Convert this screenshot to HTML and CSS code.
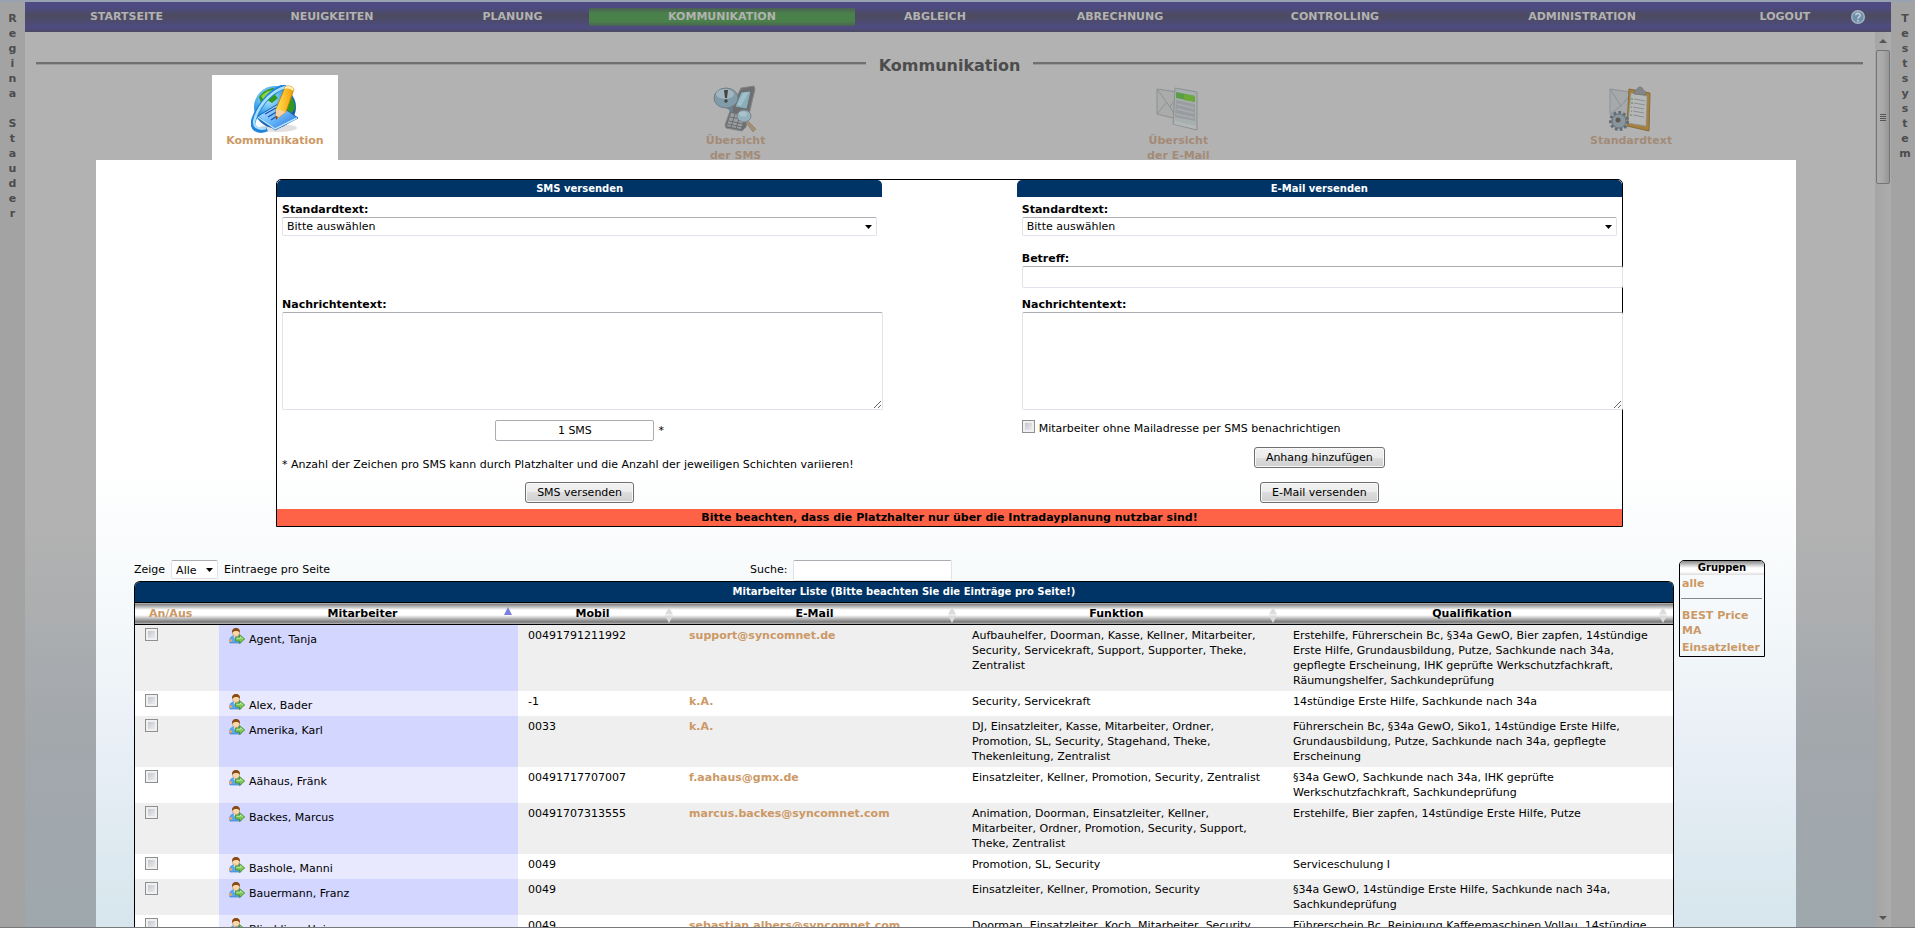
FILE: index.html
```html
<!DOCTYPE html>
<html lang="de">
<head>
<meta charset="utf-8">
<title>Kommunikation</title>
<link rel="stylesheet" href="styles.css">
</head>
<body>
<svg class="defs" aria-hidden="true">
  <symbol id="person" viewBox="0 0 16 16">
    <path d="M1 15c-1-3 0-6 3-7l4-1 4 2v6z" fill="#5aa9f0" stroke="#2f73bd" stroke-width=".6"/>
    <path d="M4.500 8l2.500 4.500L9 8z" fill="#fff"/>
    <circle cx="1.500" cy="12.500" r="1.500" fill="#e9a66a"/>
    <path d="M3.500 4.500a3.500 4 0 0 1 7 0c0 2.500-1.500 4-3.500 4s-3.500-1.500-3.500-4z" fill="#f9d8ad" stroke="#b5763c" stroke-width=".5"/>
    <path d="M3.200 5C2.500 1.500 4.500 0 7 0s4.500 1.500 3.800 5C10 3.500 9 3 7.500 3 5.500 3 4 3.500 3.200 5z" fill="#8a4a12"/>
    <path d="M6.500 9h4V6.500L15.700 11l-5.200 4.600V13h-4z" fill="#7cc651" stroke="#3d8a28" stroke-width=".8"/>
    <path d="M7.500 10.300h4V9l2.400 2" fill="none" stroke="#d6f2c0" stroke-width=".7"/>
  </symbol>
  <symbol id="both" viewBox="0 0 8 16"><path d="M0 7.500L4 0l4 7.500zM0 8.500h8L4 16z" fill="#dcdcdc"/></symbol>
</svg>
<div class="page">
  <aside class="side">R<br>e<br>g<br>i<br>n<br>a<br><br>S<br>t<br>a<br>u<br>d<br>e<br>r</aside>
  <div class="app">
    <nav class="nav">
      <a href="#">STARTSEITE</a>
      <a href="#">NEUIGKEITEN</a>
      <a href="#">PLANUNG</a>
      <a href="#" class="active">KOMMUNIKATION</a>
      <a href="#">ABGLEICH</a>
      <a href="#">ABRECHNUNG</a>
      <a href="#">CONTROLLING</a>
      <a href="#">ADMINISTRATION</a>
      <a href="#">LOGOUT</a>
      <a href="#" class="help" aria-label="Hilfe">
        <svg width="14" height="14" viewBox="0 0 14 14"><circle cx="7" cy="7" r="6.300" fill="#6f8fab" stroke="#a3b4c3" stroke-width="1.400"/><path d="M4.800 5.300C4.800 2.700 9.200 2.700 9.200 5.200 9.200 7 7 6.800 7 8.700" fill="none" stroke="#c4ced6" stroke-width="1.600"/><circle cx="7" cy="10.700" r="1" fill="#c4ced6"/></svg>
      </a>
    </nav>
    <div class="viewport">
      <main class="content">
        <h1 class="title">Kommunikation</h1>
        <div class="tabs">
          <a href="#" class="tab current">
            <svg width="48" height="48" viewBox="0 0 48 48">
              <defs>
                <radialGradient id="sea" cx=".35" cy=".3" r=".8"><stop offset="0" stop-color="#bfeaff"/><stop offset=".5" stop-color="#2b9be6"/><stop offset="1" stop-color="#0a3f8c"/></radialGradient>
                <linearGradient id="sheet" x1="0" y1="0" x2="1" y2="1"><stop offset="0" stop-color="#c4ecff"/><stop offset=".5" stop-color="#6ab8fb"/><stop offset="1" stop-color="#1763d0"/></linearGradient>
                <linearGradient id="pen" x1="0" x2="1"><stop offset="0" stop-color="#ffe257"/><stop offset="1" stop-color="#f59a00"/></linearGradient>
              </defs>
              <ellipse cx="27" cy="43" rx="19" ry="4" fill="#000" opacity=".12"/>
              <circle cx="24" cy="22" r="21" fill="url(#sea)"/>
              <path d="M8 12c4-6 9-8 14-9l6 3-4 4 3 3-6 5-5-3-6 3zM33 6c7 4 11 10 11 17l-5 8-5-6 2-7-5-5z" fill="#2f9a1d"/>
              <path d="M10 11c4-4 8-6 12-6l-3 5-7 4z" fill="#8ad24a"/>
              <path d="M35 1C22 4 9 18 3 34c-3 9 3 14 13 10" fill="none" stroke="#2384d9" stroke-width="5"/>
              <path d="M35 2C22 5 9 18 4 33c-3 9 3 12 11 10" fill="none" stroke="#a9e0ff" stroke-width="2.500"/>
              <path d="M7 31L27 19l20 14-23 12z" fill="url(#sheet)" stroke="#1560b8"/>
              <path d="M7 32l17 12 22-11" fill="none" stroke="#b8e4ff" stroke-width="1.500"/>
              <path d="M14 29l11-6M17 32l10-6M20 35l6-4" stroke="#1a4fb5" stroke-width="1.300"/>
              <path d="M25 24L34 2c3-2 7-1 9 2l-8 23-10 7z" fill="url(#pen)" stroke="#c07800" stroke-width=".8"/>
              <path d="M25 24l10 3-10 7z" fill="#f5d2a0"/><path d="M25 31l2 1-2 3z" fill="#703c10"/>
              <path d="M34 2c3-2 7-1 9 2l-1 2c-2-2-5-3-9-2z" fill="#fff0b8"/>
            </svg>
            <span>Kommunikation</span>
          </a>
          <a href="#" class="tab">
            <svg width="48" height="48" viewBox="0 0 48 48">
              <path d="M29 3l13-2 1 3-9 38-4 4-16-3-1-3 5-14z" fill="#626467" stroke="#7c7e81"/>
              <path d="M29 7l10-1-4 18-12-2z" fill="#83adbd" stroke="#555" stroke-width=".7"/>
              <path d="M31 8l6-1-8 14-4-1z" fill="#9cc4d0"/>
              <path d="M19 28l14 3-4 13-14-3z" fill="#999ca0"/>
              <path d="M18 32l14 3M17 36l14 3M16 39l14 3M23 29l-4 13M28 30l-4 14" stroke="#5e6063" stroke-width="1"/>
              <path d="M13 22l8 6-1-8z" fill="#5d7c8d"/>
              <ellipse cx="14" cy="13" rx="12" ry="10" fill="#7897a8" stroke="#66747c"/>
              <ellipse cx="13" cy="9" rx="9" ry="5" fill="#b5c7cf" opacity=".65"/>
              <path d="M12 5h4l-1 8h-2z" fill="#333"/><circle cx="14" cy="16" r="1.700" fill="#333"/>
              <path d="M34 34l10 10-3 3-9-12z" fill="#a08a6b" stroke="#857358" stroke-width=".6"/>
              <ellipse cx="32" cy="31" rx="7" ry="6" fill="#8fb1c1" stroke="#747a7d"/>
              <ellipse cx="31" cy="29" rx="4" ry="2.500" fill="#aac5cf"/>
            </svg>
            <span>Übersicht<br>der SMS</span>
          </a>
          <a href="#" class="tab">
            <svg width="48" height="48" viewBox="0 0 48 48">
              <path d="M3 4l20 3v27L3 29z" fill="#a9abac" stroke="#888a8b"/>
              <path d="M3 4l13 18L24 10M3 29l9-11M16 22l6 11" fill="none" stroke="#8a8c8d" stroke-width="1"/>
              <path d="M21 3l22 4v38l-24-6z" fill="#a7afb0" stroke="#858b8c"/>
              <path d="M22 7l19 4v6l-19-4z" fill="#4f9a36"/><path d="M30 9l11 2v6l-11-2z" fill="#62a826"/>
              <path d="M22 15l19 4v17l-20-4z" fill="#969a9c"/>
              <path d="M23 19l17 4M23 24l17 4M22 29l18 4" stroke="#a9adaf" stroke-width="1.600"/>
              <path d="M21 36l21 5v3l-22-5z" fill="#b5b9ba"/>
            </svg>
            <span>Übersicht<br>der E-Mail</span>
          </a>
          <a href="#" class="tab">
            <svg width="48" height="48" viewBox="0 0 48 48">
              <path d="M3 4l20 3v25L3 29z" fill="#a5a8ab" stroke="#8a8c8d"/>
              <path d="M3 4l11 17L23 10M14 21L3 29" fill="none" stroke="#888b8e"/>
              <path d="M22 4l21 4-1 38-22-5z" fill="#a3782a" stroke="#806128"/>
              <path d="M24 8l16 3-1 30-18-3z" fill="#b6b9ba" stroke="#8d8f90" stroke-width=".7"/>
              <path d="M27 14l11 2M27 18l11 2M26 22l11 2M26 26l11 2M26 30l11 2" stroke="#868c8e" stroke-width="1.200"/>
              <path d="M24 14l2 .3M24 18l2 .3M24 22l1 .3M24 26l1 .3M23 30l2 .3" stroke="#6c9a62" stroke-width="1.500"/>
              <path d="M27 9c0-3 1-4 3-4 0-4 6-4 6 0 2 1 3 2 3 5z" fill="#7c8083" stroke="#66696b" stroke-width=".7"/>
              <circle cx="12" cy="36" r="8" fill="#8b979f" stroke="#56616a" stroke-width="4" stroke-dasharray="2.600 2"/>
              <circle cx="12" cy="36" r="7" fill="#84929a" stroke="#626d75"/>
              <circle cx="11" cy="35" r="2.500" fill="#4f4b45"/>
            </svg>
            <span>Standardtext</span>
          </a>
        </div>
        <div class="panel">
          <form class="message">
            <div class="columns">
              <section class="column">
                <h2 class="bar">SMS versenden</h2>
                <div class="field first">
                  <label for="smsStd">Standardtext:</label>
                  <select id="smsStd" class="box"><option>Bitte auswählen</option></select>
                </div>
                <div class="field wide">
                  <label for="smsText">Nachrichtentext:</label>
                  <textarea id="smsText" class="box"></textarea>
                </div>
                <div class="row counter"><input class="count" type="text" value="1 SMS" aria-label="Anzahl SMS" readonly><span>*</span></div>
                <p class="note">* Anzahl der Zeichen pro SMS kann durch Platzhalter und die Anzahl der jeweiligen Schichten variieren!</p>
                <div class="row send"><button type="button">SMS versenden</button></div>
              </section>
              <section class="column">
                <h2 class="bar">E-Mail versenden</h2>
                <div class="field first">
                  <label for="mailStd">Standardtext:</label>
                  <select id="mailStd" class="box"><option>Bitte auswählen</option></select>
                </div>
                <div class="field wide subject">
                  <label for="subj">Betreff:</label>
                  <input id="subj" class="box" type="text">
                </div>
                <div class="field wide">
                  <label for="mailText">Nachrichtentext:</label>
                  <textarea id="mailText" class="box"></textarea>
                </div>
                <div class="notify"><input type="checkbox" id="notify"><label for="notify">Mitarbeiter ohne Mailadresse per SMS benachrichtigen</label></div>
                <div class="row attach"><button type="button">Anhang hinzufügen</button></div>
                <div class="row send"><button type="button">E-Mail versenden</button></div>
              </section>
            </div>
            <p class="warning">Bitte beachten, dass die Platzhalter nur über die Intradayplanung nutzbar sind!</p>
          </form>
          <div class="lower">
            <section class="list">
              <div class="tools">
                <div class="length"><label for="len">Zeige</label><select id="len" class="box"><option>Alle</option></select><span>Eintraege pro Seite</span></div>
                <div class="search"><label for="search">Suche:</label><input id="search" class="box" type="text"></div>
              </div>
              <div class="frame">
                <h2 class="bar">Mitarbeiter Liste (Bitte beachten Sie die Einträge pro Seite!)</h2>
                <table class="staff">
                  <colgroup><col class="c1"><col class="c2"><col class="c3"><col class="c4"><col class="c5"><col class="c6"></colgroup>
                  <thead>
                    <tr>
                      <th class="toggle"><a href="#">An/Aus</a></th>
                      <th>Mitarbeiter<svg class="sort up" viewBox="0 0 8 8"><path d="M0 8L4 0l4 8z" fill="#7a7fe0"/></svg></th>
                      <th>Mobil<svg class="sort"><use href="#both"/></svg></th>
                      <th>E-Mail<svg class="sort"><use href="#both"/></svg></th>
                      <th>Funktion<svg class="sort"><use href="#both"/></svg></th>
                      <th>Qualifikation<svg class="sort"><use href="#both"/></svg></th>
                    </tr>
                  </thead>
                  <tbody>
                    <tr><td><input type="checkbox" aria-label="Agent, Tanja"></td><td><span class="name"><svg><use href="#person"/></svg>Agent, Tanja</span></td><td>00491791211992</td><td><a href="#">support@syncomnet.de</a></td><td>Aufbauhelfer, Doorman, Kasse, Kellner, Mitarbeiter, Security, Servicekraft, Support, Supporter, Theke, Zentralist</td><td>Erstehilfe, Führerschein Bc, §34a GewO, Bier zapfen, 14stündige Erste Hilfe, Grundausbildung, Putze, Sachkunde nach 34a, gepflegte Erscheinung, IHK geprüfte Werkschutzfachkraft, Räumungshelfer, Sachkundeprüfung</td></tr>
                    <tr><td><input type="checkbox" aria-label="Alex, Bader"></td><td><span class="name"><svg><use href="#person"/></svg>Alex, Bader</span></td><td>-1</td><td><a href="#">k.A.</a></td><td>Security, Servicekraft</td><td>14stündige Erste Hilfe, Sachkunde nach 34a</td></tr>
                    <tr><td><input type="checkbox" aria-label="Amerika, Karl"></td><td><span class="name"><svg><use href="#person"/></svg>Amerika, Karl</span></td><td>0033</td><td><a href="#">k.A.</a></td><td>DJ, Einsatzleiter, Kasse, Mitarbeiter, Ordner, Promotion, SL, Security, Stagehand, Theke, Thekenleitung, Zentralist</td><td>Führerschein Bc, §34a GewO, Siko1, 14stündige Erste Hilfe, Grundausbildung, Putze, Sachkunde nach 34a, gepflegte Erscheinung</td></tr>
                    <tr><td><input type="checkbox" aria-label="Aähaus, Fränk"></td><td><span class="name"><svg><use href="#person"/></svg>Aähaus, Fränk</span></td><td>00491717707007</td><td><a href="#">f.aahaus@gmx.de</a></td><td>Einsatzleiter, Kellner, Promotion, Security, Zentralist</td><td>§34a GewO, Sachkunde nach 34a, IHK geprüfte Werkschutzfachkraft, Sachkundeprüfung</td></tr>
                    <tr><td><input type="checkbox" aria-label="Backes, Marcus"></td><td><span class="name"><svg><use href="#person"/></svg>Backes, Marcus</span></td><td>00491707313555</td><td><a href="#">marcus.backes@syncomnet.com</a></td><td>Animation, Doorman, Einsatzleiter, Kellner, Mitarbeiter, Ordner, Promotion, Security, Support, Theke, Zentralist</td><td>Erstehilfe, Bier zapfen, 14stündige Erste Hilfe, Putze</td></tr>
                    <tr><td><input type="checkbox" aria-label="Bashole, Manni"></td><td><span class="name"><svg><use href="#person"/></svg>Bashole, Manni</span></td><td>0049</td><td></td><td>Promotion, SL, Security</td><td>Serviceschulung I</td></tr>
                    <tr><td><input type="checkbox" aria-label="Bauermann, Franz"></td><td><span class="name"><svg><use href="#person"/></svg>Bauermann, Franz</span></td><td>0049</td><td></td><td>Einsatzleiter, Kellner, Promotion, Security</td><td>§34a GewO, 14stündige Erste Hilfe, Sachkunde nach 34a, Sachkundeprüfung</td></tr>
                    <tr><td><input type="checkbox" aria-label="Blindding, Heinz"></td><td><span class="name"><svg><use href="#person"/></svg>Blindding, Heinz</span></td><td>0049</td><td><a href="#">sebastian.albers@syncomnet.com</a></td><td>Doorman, Einsatzleiter, Koch, Mitarbeiter, Security</td><td>Führerschein Bc, Reinigung Kaffeemaschinen Vollau, 14stündige</td></tr>
                  </tbody>
                </table>
              </div>
            </section>
            <aside class="groups">
              <h2>Gruppen</h2>
              <a href="#">alle</a>
              <hr>
              <a href="#">BEST Price MA</a>
              <a href="#">Einsatzleiter</a>
            </aside>
          </div>
        </div>
      </main>
      <div class="scroll" aria-hidden="true">
        <svg width="8" height="5" viewBox="0 0 8 5"><path d="M0 5l4-4 4 4z" fill="#555"/></svg>
        <div class="thumb"><i></i><i></i><i></i><i></i></div>
        <svg class="down" width="8" height="5" viewBox="0 0 8 5"><path d="M0 0l4 4 4-4z" fill="#555"/></svg>
      </div>
    </div>
  </div>
  <aside class="side right">T<br>e<br>s<br>t<br>s<br>y<br>s<br>t<br>e<br>m</aside>
</div>
</body>
</html>
```
FILE: styles.css
```css
* { box-sizing: border-box; }

body {
  margin: 0;
  height: 100vh;
  overflow: hidden;
  font: 11px/15px "DejaVu Sans", Verdana, sans-serif;
  color: #000;
}

h1, h2, p { margin: 0; }
input, select, textarea, button { font: inherit; color: inherit; margin: 0; }
a { color: #cc9966; font-weight: bold; text-decoration: none; }
.defs { position: absolute; width: 0; height: 0; }

.page {
  display: flex;
  height: 100vh;
  border-top: 2px solid #99a2b0;
  border-bottom: 1px solid #77797c;
  background: #a3a3a3;
}

.side {
  flex: 0 0 25px;
  padding-top: 9px;
  text-align: center;
  font-weight: bold;
  color: #4c4c4c;
}
.side.right { flex-basis: 24px; padding-left: 4px; }

.app { flex: 1; min-width: 0; display: flex; flex-direction: column; }

.nav {
  display: grid;
  grid-template-columns: 203fr 208fr 153fr 266fr 160fr 210fr 220fr 274fr 132fr 40fr;
  flex: 0 0 30px;
  align-items: center;
  background: linear-gradient(#4d4b82, #4d4b80 20%, #4c4a5e 45%, #4d4b66 55%, #4d4b82 85%, #4c4a62);
}
.nav a { color: #b2b2b2; text-align: center; line-height: 18px; }
.nav .active { background: linear-gradient(#4b5f55, #4a8049 30%, #4a8049 75%, #4b5f55); }
.nav .help { display: flex; text-align: left; }

.viewport { flex: 1; min-height: 0; display: flex; }
.content {
  flex: 1;
  min-width: 0;
  display: flex;
  flex-direction: column;
  overflow: hidden;
  background: linear-gradient(#b2b2b2 55%, #a2a7ac 80%, #9ea8ac);
}

.title {
  display: flex;
  align-items: center;
  gap: 13px;
  margin: 24px 12px 0 11px;
  font-size: 16px;
  line-height: 19px;
  color: #4c4c4c;
}
.title::before, .title::after {
  content: "";
  flex: 1;
  height: 2px;
  margin-bottom: 5px;
  background: #707070;
  border-bottom: 1px solid #999;
}

.tabs {
  display: grid;
  grid-template-columns: 478fr 444fr 442fr 464fr;
  margin: 0 12px 0 11px;
  height: 85px;
}
.tab {
  justify-self: center;
  display: flex;
  flex-direction: column;
  align-items: center;
  width: 126px;
  padding-top: 10px;
  text-align: center;
  color: #a38b77;
}
.tab svg { flex: 0 0 48px; opacity: .85; }
.tab.current { background: #fff; color: #cc9966; }
.tab.current svg { opacity: 1; }

.panel {
  flex: 1;
  min-height: 0;
  margin: 0 79px 0 71px;
  padding: 19px 31px 0 38px;
  background: linear-gradient(#fff 40%, #f4f8fa 60%, #e6edf5 80%, #d6e6ec);
}

.message {
  width: 1347px;
  max-width: 83%;
  margin: 0 auto;
  border: 1px solid #000;
  border-radius: 5px 5px 0 0;
}
.columns { display: grid; grid-template-columns: 1fr 1fr; column-gap: 10%; }
.column { display: flex; flex-direction: column; min-width: 0; }
.bar {
  background: #003366;
  color: #fff;
  font-size: 10px;
  line-height: 17px;
  text-align: center;
  border-radius: 5px 5px 0 0;
}
.box {
  background: #fff;
  border: 1px solid #e2e3ea;
  border-top-color: #abadb3;
  border-radius: 2px;
}
select.box {
  appearance: none;
  height: 19px;
  padding: 0 4px;
  background: #fff url("data:image/svg+xml,%3Csvg xmlns='http://www.w3.org/2000/svg' width='7' height='4'%3E%3Cpath d='M0 0h7L3.500 4z'/%3E%3C/svg%3E") no-repeat right 4px center;
}
.field { display: flex; flex-direction: column; padding: 0 5px; }
.field label { font-weight: bold; }
.field.first { padding-top: 5px; height: 61px; }
.field.wide { padding-right: 0; margin-right: -1px; }
.first + .wide { padding-top: 39px; }
.first + .subject { height: 46px; margin-top: -7px; padding-top: 0; }
.subject input { height: 22px; }
textarea.box { height: 98px; resize: vertical; }
.row { display: flex; justify-content: center; }
.counter { margin-top: 10px; gap: 4px; line-height: 21px; }
.count { width: 159px; height: 21px; text-align: center; border: 1px solid #abadb3; border-radius: 2px; background: #fff; }
.note { padding: 0 5px; margin: 16px 0 10px; white-space: nowrap; }
button {
  height: 21px;
  padding: 0 11px;
  border: 1px solid #707070;
  border-radius: 3px;
  background: linear-gradient(#f2f2f2, #ebebeb 50%, #dddddd 50%, #cfcfcf);
  box-shadow: inset 0 0 0 1px #f8f8f8;
}
.send { margin-bottom: 6px; margin-top: auto; }
.notify { display: flex; gap: 4px; padding: 10px 5px 0; }
.notify label { padding-top: 1px; }
.attach { margin-top: 11px; }
.warning { background: #ff6347; font-weight: bold; text-align: center; line-height: 17px; }

input[type="checkbox"] {
  appearance: none;
  display: block;
  width: 13px;
  height: 13px;
  border: 1px solid #8e8f8f;
  background: linear-gradient(135deg, #b8bcc4, #f6f6f6);
  box-shadow: inset 0 0 0 2px #f0f0f0;
}

.lower { display: flex; align-items: flex-start; gap: 5px; margin-top: 33px; }
.list { flex: 1; min-width: 0; }
.tools { display: grid; grid-template-columns: 2fr 3fr; height: 21px; }
.length, .search { display: flex; align-items: flex-start; gap: 6px; line-height: 20px; }
.search input { width: 159px; height: 21px; }
#len { width: 47px; }

.frame { border: 1px solid #000; border-bottom: 0; border-radius: 6px 6px 0 0; }
.frame .bar { line-height: 20px; }
.staff { width: 100%; border-collapse: collapse; table-layout: fixed; }
.c1 { width: 84px; }
.c2 { width: 299px; }
.c3 { width: 161px; }
.c4 { width: 283px; }
.c5 { width: 321px; }
.staff thead tr {
  background: linear-gradient(#808080, #fff 30%, #fff 55%, #777 90%, #bbb);
  border: solid #000;
  border-width: 1px 0;
}
.staff th { position: relative; height: 22px; padding: 0 16px 0 4px; }
.staff .toggle { text-align: left; padding-left: 14px; }
.sort { position: absolute; right: 6px; top: 4px; width: 8px; height: 16px; }
.sort.up { height: 8px; }
.staff td { vertical-align: top; padding: 3px 9px 3px 10px; background: #fff; }
.staff tbody tr:nth-child(odd) td { background: #efefef; }
.staff tbody tr td:nth-child(2) { background: #e8e8ff; }
.staff tbody tr:nth-child(odd) td:nth-child(2) { background: #d3d6ff; }
.name { display: flex; align-items: flex-end; gap: 4px; height: 19px; }
.name svg { width: 16px; height: 16px; align-self: flex-start; }

.groups {
  flex: 0 0 86px;
  display: flex;
  flex-direction: column;
  border: 1px solid #000;
  border-radius: 5px 5px 0 0;
  overflow: hidden;
}
.groups h2 { font-size: 10px; line-height: 14px; text-align: center; background: linear-gradient(#888, #fff 50%, #fff 75%, #ddd); }
.groups a { padding: 1px 2px; }
.groups hr { width: 81px; height: 1px; margin: 6px 1px 8px; border: 0; background: #888; }

.scroll {
  flex: 0 0 16px;
  display: flex;
  flex-direction: column;
  align-items: center;
  padding: 6px 0;
  background: linear-gradient(90deg, #a5a5a5, #acacac);
}
.thumb {
  display: flex;
  flex-direction: column;
  align-items: center;
  justify-content: center;
  gap: 1px;
  width: 14px;
  height: 134px;
  margin-top: 7px;
  border: 1px solid #757575;
  border-radius: 2px;
  background: linear-gradient(90deg, #adadad, #a9a9a9 45%, #969696);
}
.thumb i { width: 6px; height: 1px; background: #555; }
.down { margin-top: auto; }
```
